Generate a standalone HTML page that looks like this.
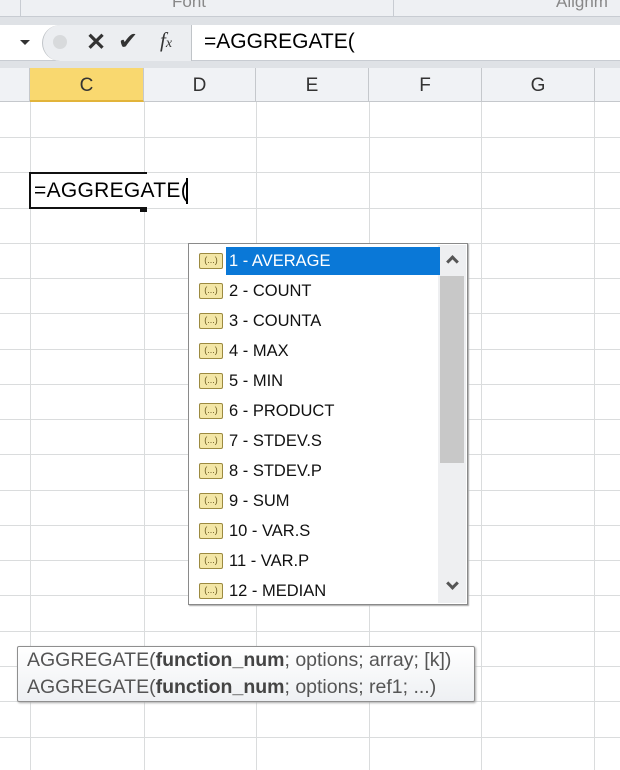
<!DOCTYPE html>
<html><head><meta charset="utf-8"><style>
*{margin:0;padding:0;box-sizing:border-box}
body{width:620px;height:770px;overflow:hidden;background:#fff;font-family:"Liberation Sans",sans-serif;position:relative}
.a{position:absolute}
.vl{position:absolute;top:102px;bottom:0;width:1px;background:#dadcdd}
.hl{position:absolute;left:0;right:0;height:1px;background:#dadcdd}
.hd{position:absolute;top:68px;height:34px;border-right:1px solid #c5c8cc;text-align:center;line-height:36px;font-size:19px;color:#333}
.it{position:absolute;left:4px;width:240px;height:28px;font-size:16.5px;line-height:28px;color:#111;white-space:nowrap}
.ic{position:absolute;left:6px;top:6px;width:24px;height:16px;border:1px solid #9c8a40;background:#f3e6a6;border-radius:2px;font-size:9px;line-height:12px;text-align:center;color:#6b5a20}
.tx{position:absolute;left:33px;top:0;padding:0 3px;height:28px;white-space:nowrap}
</style></head><body>
<div class="a" style="left:0;top:0;width:620px;height:17px;background:#eef0f3;border-bottom:1px solid #c8ccd2"></div>
<div class="a" style="left:20px;top:0;width:1px;height:16px;background:#c8ccd2"></div>
<div class="a" style="left:393px;top:0;width:1px;height:16px;background:#c8ccd2"></div>
<div class="a" style="left:172px;top:-8px;font-size:17px;color:#888">Font</div>
<div class="a" style="left:556px;top:-8px;font-size:17px;color:#888">Alignm</div>
<div class="a" style="left:0;top:17px;width:620px;height:8px;background:#dfe2e6"></div>
<div class="a" style="left:0;top:25px;width:620px;height:36px;background:#fff;border-bottom:1px solid #c8ccd2"></div>
<div class="a" style="left:20px;top:40px;width:0;height:0;border-left:5px solid transparent;border-right:5px solid transparent;border-top:5px solid #333"></div>
<div class="a" style="left:42px;top:25px;width:150px;height:36px;background:#eceef1;border-left:1px solid #c0c4c8;border-right:1px solid #c0c4c8;border-radius:18px 0 0 18px"></div>
<div class="a" style="left:53px;top:35px;width:14px;height:14px;border-radius:7px;background:#d8dadc"></div>
<div class="a" style="left:86px;top:28px;font-size:24px;color:#333;font-weight:bold">✕</div>
<div class="a" style="left:118px;top:27px;font-size:24px;color:#333">✔</div>
<div class="a" style="left:160px;top:28px;font-size:21px;color:#333;font-family:'Liberation Serif',serif;font-style:italic">f<span style="font-size:14px">x</span></div>
<div class="a" style="left:204px;top:30px;font-size:21px;color:#000">=AGGREGATE(</div>
<div class="a" style="left:0;top:61px;width:620px;height:7px;background:#dfe2e6"></div>
<div class="a" style="left:0;top:68px;width:620px;height:34px;background:#f0f2f5;border-bottom:1px solid #c5c8cc"></div>
<div class="hd" style="left:0;width:30px"></div>
<div class="hd" style="left:30px;width:114px;background:#f9d86f;border-bottom:2px solid #e2b43a">C</div>
<div class="hd" style="left:144px;width:112px">D</div>
<div class="hd" style="left:256px;width:113px">E</div>
<div class="hd" style="left:369px;width:113px">F</div>
<div class="hd" style="left:482px;width:113px">G</div>
<div class="vl" style="left:30px"></div><div class="vl" style="left:144px"></div><div class="vl" style="left:256px"></div><div class="vl" style="left:369px"></div><div class="vl" style="left:481px"></div><div class="vl" style="left:594px"></div>
<div class="hl" style="top:137px"></div><div class="hl" style="top:172px"></div><div class="hl" style="top:208px"></div><div class="hl" style="top:243px"></div><div class="hl" style="top:278px"></div><div class="hl" style="top:313px"></div><div class="hl" style="top:349px"></div><div class="hl" style="top:384px"></div><div class="hl" style="top:419px"></div><div class="hl" style="top:454px"></div><div class="hl" style="top:490px"></div><div class="hl" style="top:525px"></div><div class="hl" style="top:560px"></div><div class="hl" style="top:595px"></div><div class="hl" style="top:631px"></div><div class="hl" style="top:666px"></div><div class="hl" style="top:701px"></div><div class="hl" style="top:737px"></div>
<div class="a" style="left:29px;top:172px;width:116px;height:37px;border:2px solid #111;border-right:none"></div>
<div class="a" style="left:145px;top:172px;width:2px;height:3px;background:#111"></div>
<div class="a" style="left:140px;top:207px;width:7px;height:5px;background:#111"></div>
<div class="a" style="left:31px;top:174px;width:160px;height:33px;background:#fff"></div>
<div class="a" style="left:34px;top:179px;font-size:21px;color:#000;letter-spacing:0.3px">=AGGREGATE(</div>
<div class="a" style="left:186px;top:178px;width:2px;height:26px;background:#000"></div>
<div class="a" style="left:188px;top:243px;width:280px;height:362px;background:#fff;border:1px solid #8a8a8a;box-shadow:1px 1px 1px #aaa">
<div class="a" style="left:249px;top:1px;width:28px;height:358px;background:#eeeff1"></div>
<div class="a" style="left:251px;top:32px;width:24px;height:187px;background:#c8c8c8"></div>
<div class="a" style="left:259px;top:13px;width:9px;height:9px;border-left:3px solid #555;border-top:3px solid #555;transform:rotate(45deg)"></div>
<div class="a" style="left:259px;top:335px;width:9px;height:9px;border-right:3px solid #555;border-bottom:3px solid #555;transform:rotate(45deg)"></div>
<div class="it" style="top:3px"><div class="ic">(...)</div><div class="tx" style="background:#0a78d7;color:#fff;width:214px">1 - AVERAGE</div></div>
<div class="it" style="top:33px"><div class="ic">(...)</div><div class="tx">2 - COUNT</div></div>
<div class="it" style="top:63px"><div class="ic">(...)</div><div class="tx">3 - COUNTA</div></div>
<div class="it" style="top:93px"><div class="ic">(...)</div><div class="tx">4 - MAX</div></div>
<div class="it" style="top:123px"><div class="ic">(...)</div><div class="tx">5 - MIN</div></div>
<div class="it" style="top:153px"><div class="ic">(...)</div><div class="tx">6 - PRODUCT</div></div>
<div class="it" style="top:183px"><div class="ic">(...)</div><div class="tx">7 - STDEV.S</div></div>
<div class="it" style="top:213px"><div class="ic">(...)</div><div class="tx">8 - STDEV.P</div></div>
<div class="it" style="top:243px"><div class="ic">(...)</div><div class="tx">9 - SUM</div></div>
<div class="it" style="top:273px"><div class="ic">(...)</div><div class="tx">10 - VAR.S</div></div>
<div class="it" style="top:303px"><div class="ic">(...)</div><div class="tx">11 - VAR.P</div></div>
<div class="it" style="top:333px"><div class="ic">(...)</div><div class="tx">12 - MEDIAN</div></div>
</div>
<div class="a" style="left:17px;top:646px;width:458px;height:56px;background:linear-gradient(#fff,#eef0f3);border:1px solid #8f8f8f;border-radius:2px;box-shadow:1px 1px 2px #aaa;font-size:19.5px;color:#555;padding:0 0 0 9px;line-height:27px;white-space:nowrap">
AGGREGATE(<b style="color:#444">function_num</b>; options; array; [k])<br>AGGREGATE(<b style="color:#444">function_num</b>; options; ref1; ...)
</div>
</body></html>
